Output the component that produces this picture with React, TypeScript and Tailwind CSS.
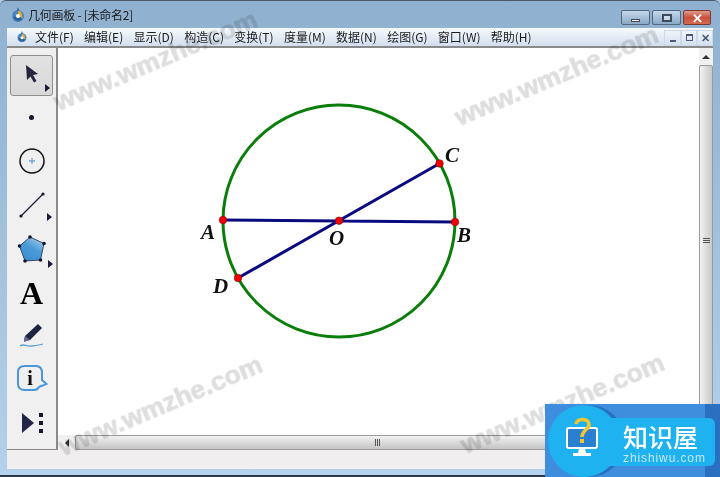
import React from 'react'

const cjk = { fontFamily: '"Noto Sans CJK SC", "Liberation Sans", sans-serif' }

const menus = ['文件(F)', '编辑(E)', '显示(D)', '构造(C)', '变换(T)', '度量(M)', '数据(N)', '绘图(G)', '窗口(W)', '帮助(H)']

const points: [string, number, number][] = [
  ['A', 222, 220],
  ['B', 454, 222],
  ['C', 438.5, 163.5],
  ['D', 237, 278],
  ['O', 338, 220.7],
]

const labels: [string, number, number][] = [
  ['A', 200, 239],
  ['B', 456, 242],
  ['C', 444, 162],
  ['D', 212, 293],
  ['O', 328, 245],
]

const marks = [
  { x: 55, y: 90 },
  { x: 456, y: 105 },
  { x: 60, y: 435 },
  { x: 462, y: 433 },
]

function SmallArrow() {
  return <span className="absolute right-[2px] bottom-[3px] h-0 w-0 border-y-[4px] border-l-[5px] border-y-transparent border-l-[#1a1a3a]" />
}

function AppIcon({ size }: { size: number }) {
  return (
    <svg width={size} height={size} viewBox="0 0 16 16">
      <circle cx="8" cy="9" r="6" fill="#4a86c0" />
      <path d="M8 3 C11 4 13 7 12 11 L8 9 Z" fill="#e8a53a" />
      <path d="M3 10 C5 14 9 15 12 12 L8 9 Z" fill="#2d5f96" />
      <circle cx="8" cy="9" r="2" fill="#ffffff" />
      <path d="M8 0 L9.5 4 L6.5 4 Z" fill="#3b6ea5" />
    </svg>
  )
}

function Tools() {
  return (
    <div className="flex w-[51px] shrink-0 flex-col items-center border-r-2 border-[#8a8a8a] bg-[#f0f0f0] pt-[7px]">
      <div className="relative flex h-[41px] w-[43px] items-center justify-center rounded-[3px] border border-[#8e8e8e] bg-gradient-to-b from-[#e2e2e2] to-[#d8d8d8]">
        <svg width="16" height="20" viewBox="0 0 16 20" className="mb-[4px]">
          <path d="M2 1 L14 10 L9 11 L12.5 17 L10 18.5 L6.5 12.5 L3 16 Z" fill="#24243f" />
        </svg>
        <SmallArrow />
      </div>
      <div className="flex h-[43px] w-[43px] items-center justify-center">
        <span className="h-[5px] w-[5px] rounded-full bg-[#16162e]" />
      </div>
      <div className="flex h-[44px] w-[43px] items-center justify-center">
        <svg width="28" height="28" viewBox="0 0 28 28">
          <circle cx="14" cy="14" r="12" fill="none" stroke="#111" strokeWidth="1.5" />
          <path d="M14 11 V17 M11 14 H17" stroke="#6aa5dc" strokeWidth="1.3" />
        </svg>
      </div>
      <div className="relative flex h-[44px] w-[43px] items-center justify-center">
        <svg width="28" height="28" viewBox="0 0 28 28">
          <path d="M3 25 L25 3" stroke="#1d1d3a" strokeWidth="1.2" />
          <circle cx="3" cy="25" r="1.6" fill="#16162e" />
          <circle cx="25" cy="3" r="1.6" fill="#16162e" />
        </svg>
        <span className="absolute right-[1px] bottom-[6px] h-0 w-0 border-y-[4px] border-l-[5px] border-y-transparent border-l-[#1a1a3a]" />
      </div>
      <div className="relative flex h-[44px] w-[43px] items-center justify-center">
        <svg width="30" height="30" viewBox="0 0 30 30">
          <defs>
            <linearGradient id="pent" x1="0.8" y1="0" x2="0.2" y2="1">
              <stop offset="0" stopColor="#a9cbea" />
              <stop offset="0.45" stopColor="#4b9cd8" />
              <stop offset="1" stopColor="#3a8dce" />
            </linearGradient>
          </defs>
          <path d="M13 3 L27 9.5 L23.5 26 L8 27 L2.5 12 Z" fill="url(#pent)" stroke="#1d2a4a" strokeWidth="0.8" />
          {[[13, 3], [27, 9.5], [23.5, 26], [8, 27], [2.5, 12]].map(([x, y]) => (
            <circle key={x} cx={x} cy={y} r="1.8" fill="#16162e" />
          ))}
        </svg>
        <span className="absolute right-[0px] bottom-[3px] h-0 w-0 border-y-[4px] border-l-[5px] border-y-transparent border-l-[#1a1a3a]" />
      </div>
      <div className="flex h-[43px] w-[43px] items-center justify-center">
        <span className="text-[32px] leading-none font-bold text-black" style={{ fontFamily: '"Liberation Serif", serif' }}>A</span>
      </div>
      <div className="flex h-[43px] w-[43px] items-center justify-center">
        <svg width="26" height="26" viewBox="0 0 26 26">
          <path d="M19 1 L23 5 L11 17 L5 18 L6 13 Z" fill="#1e2340" />
          <path d="M6 13 L11 17 L5 19 Z" fill="#5d6b8c" />
          <path d="M1 23 C5 20 7 24 13 23 C17 22.5 21 22 24 21" fill="none" stroke="#5c9fd8" strokeWidth="1.3" />
        </svg>
      </div>
      <div className="flex h-[43px] w-[43px] items-center justify-center">
        <svg width="32" height="30" viewBox="0 0 32 30">
          <path d="M9 2 H20 C24 2 26 5 26 9 V16 L30.5 20 C28 21.5 25 21.5 23 23 C22 25 21 26 18 26 H9 C5 26 2 24 2 20 V8 C2 4 5 2 9 2 Z" fill="none" stroke="#4a96d8" strokeWidth="2" />
          <text x="14" y="21" textAnchor="middle" fontFamily="Liberation Serif, serif" fontWeight="700" fontSize="20" fill="#111">i</text>
        </svg>
      </div>
      <div className="flex h-[45px] w-[43px] items-center justify-center">
        <svg width="24" height="22" viewBox="0 0 24 22">
          <path d="M2 1 L14 11 L2 21 Z" fill="#24244a" />
          <rect x="19" y="1" width="4" height="4" fill="#16162e" />
          <rect x="19" y="9" width="4" height="4" fill="#16162e" />
          <rect x="19" y="17" width="4" height="4" fill="#16162e" />
        </svg>
      </div>
    </div>
  )
}

function Drawing() {
  return (
    <svg className="block h-full w-full" viewBox="58 48 639 387">
      <circle cx="338" cy="221" r="116" fill="none" stroke="#0a7d0a" strokeWidth="3" />
      <path d="M222 220 L454 222 M438.5 163.5 L237 278" stroke="#0a0a80" strokeWidth="3" />
      {points.map(([k, x, y]) => (
        <circle key={k} cx={x} cy={y} r="3.8" fill="#f00000" stroke="#7a1010" strokeWidth="0.6" />
      ))}
      {labels.map(([k, x, y]) => (
        <text key={k} x={x} y={y} fontFamily="Liberation Serif, serif" fontStyle="italic" fontWeight="700" fontSize="21" fill="#111">
          {k}
        </text>
      ))}
    </svg>
  )
}

function Logo() {
  return (
    <div className="absolute top-[404px] left-[545px] h-[73px] w-[175px] overflow-hidden bg-[#3f8ddd]">
      <div className="absolute top-0 right-0 h-full w-[15px] bg-[#2a6fc0]" />
      <div className="absolute top-[1px] left-[8px] h-[72px] w-[72px] rounded-full bg-[#2a6fc0]" />
      <div className="absolute top-[1px] left-[3px] h-[72px] w-[72px] rounded-full bg-[#1fb2f0]" />
      <div className="absolute top-[14px] left-[30px] h-[48px] w-[140px] rounded-[6px] bg-[#1fb2f0]" />
      <svg className="absolute top-[13px] left-[21px]" width="32" height="41" viewBox="0 0 32 41">
        <rect x="1" y="11" width="30" height="20" rx="2" fill="#2a7fd0" stroke="#fff" strokeWidth="2" />
        <path d="M13 32 H19 L20 36 H25 V39 H7 V36 H12 Z" fill="#fff" />
        <path d="M10 7 C11 1 22 1 23 7 C24 12 16 13 16 20" fill="none" stroke="#f3c530" strokeWidth="3.6" />
        <rect x="14" y="22" width="4" height="4" fill="#f3c530" />
      </svg>
      <div className="absolute top-[17px] left-[78px] text-[25px] leading-[30px] font-medium whitespace-nowrap text-white" style={cjk}>知识屋</div>
      <div className="absolute top-[47px] left-[78px] text-[12px] leading-[14px] tracking-[0.9px] whitespace-nowrap text-[#c5e8fb]" style={{ fontFamily: '"Liberation Sans", sans-serif' }}>zhishiwu.com</div>
    </div>
  )
}

export default function App() {
  return (
    <div className="relative h-[477px] w-[720px] overflow-hidden bg-[#a9c9e8] text-[#1b1b1b]" style={cjk}>
      <div className="flex h-full flex-col rounded-t-[6px] border-t border-[#4a5a68] bg-gradient-to-b from-[#8fb0cf] via-[#a3c1dd] to-[#b4d2ee] pb-[2px]">
        {/* title bar */}
        <div className="flex h-[27px] shrink-0 items-center pr-[9px] pl-[10px]">
          <AppIcon size={16} />
          <span className="ml-[2px] text-[12px] tracking-[-0.25px] whitespace-nowrap">几何画板 - [未命名2]</span>
          <div className="ml-auto flex items-center gap-[2px] self-start pt-[9px]">
            <div className="flex h-[15px] w-[29px] items-end justify-center rounded-[2px] border border-[#51687f] bg-gradient-to-b from-[#c4d8ea] to-[#8aa9c6] pb-[2px]">
              <span className="h-[3px] w-[9px] border border-[#445] bg-white" />
            </div>
            <div className="flex h-[15px] w-[29px] items-center justify-center rounded-[2px] border border-[#51687f] bg-gradient-to-b from-[#c4d8ea] to-[#8aa9c6]">
              <span className="h-[8px] w-[10px] border-2 border-[#3d4a5c] bg-white/40" />
            </div>
            <div className="flex h-[15px] w-[28px] items-center justify-center rounded-[2px] border border-[#7a3a30] bg-gradient-to-b from-[#dd9a8a] via-[#c9503c] to-[#d26a50] text-[13px] leading-none font-bold text-white">✕</div>
          </div>
        </div>

        {/* menu bar */}
        <div className="mx-[7px] flex h-[20px] shrink-0 items-center border-b-2 border-[#8a8a8a] bg-gradient-to-b from-[#f6f9fd] to-[#d3deee] text-[12px]">
          <span className="ml-[9px] flex h-[14px] w-[12px] items-center justify-center"><AppIcon size={12} /></span>
          <div className="ml-[7px] flex gap-[10.3px] whitespace-nowrap">
            {menus.map((m) => (
              <span key={m}>{m}</span>
            ))}
          </div>
          <div className="mt-[1px] ml-auto flex text-[#4a5a78]">
            <span className="flex h-[16px] w-[17px] items-end justify-center border border-[#cdd8e8] pb-[3px]"><span className="h-[2px] w-[6px] bg-[#4a5a78]" /></span>
            <span className="flex h-[16px] w-[16px] items-center justify-center border border-[#cdd8e8]"><span className="h-[7px] w-[7px] border border-t-2 border-[#4a5a78]" /></span>
            <span className="flex h-[16px] w-[16px] items-center justify-center border border-[#cdd8e8] text-[11px] leading-none font-bold">✕</span>
          </div>
        </div>

        {/* client area */}
        <div className="mx-[7px] flex min-h-0 flex-1 border-b border-[#8a8a8a] bg-[#f0f0f0]">
          <Tools />
          <div className="flex min-w-0 flex-1 flex-col">
            <div className="flex h-[387px] shrink-0">
              <div className="min-w-0 flex-1 bg-white">
                <Drawing />
              </div>
              <div className="flex w-[14px] shrink-0 flex-col bg-[#f0f0f0]">
                <div className="flex h-[17px] shrink-0 items-center justify-center">
                  <span className="h-0 w-0 border-x-[4px] border-b-[4px] border-x-transparent border-b-[#333]" />
                </div>
                <div className="flex flex-1 items-center justify-center rounded-[2px] border border-[#9a9a9a] bg-gradient-to-r from-[#f2f2f2] to-[#c8c8c8]">
                  <div className="flex flex-col gap-[1px]">
                    <span className="h-[1px] w-[7px] bg-[#555]" />
                    <span className="h-[1px] w-[7px] bg-[#555]" />
                    <span className="h-[1px] w-[7px] bg-[#555]" />
                  </div>
                </div>
                <div className="h-[20px] shrink-0" />
              </div>
            </div>
            <div className="flex h-[15px] shrink-0 bg-[#f0f0f0]">
              <div className="flex w-[17px] shrink-0 items-center justify-center">
                <span className="h-0 w-0 border-y-[4px] border-r-[4px] border-y-transparent border-r-[#333]" />
              </div>
              <div className="flex flex-1 items-center justify-center rounded-[2px] border border-[#9a9a9a] bg-gradient-to-b from-[#f2f2f2] to-[#c4c4c4]">
                <div className="flex gap-[1px]">
                  <span className="h-[7px] w-[1px] bg-[#555]" />
                  <span className="h-[7px] w-[1px] bg-[#555]" />
                  <span className="h-[7px] w-[1px] bg-[#555]" />
                </div>
              </div>
              <div className="w-[34px] shrink-0" />
            </div>
          </div>
        </div>

        {/* status bar */}
        <div className="mx-[7px] h-[19px] shrink-0 bg-[#f0eeee]" />
        <div className="h-[6px] shrink-0" />
      </div>
      <div className="absolute inset-x-0 bottom-0 h-[2px] bg-[#2c3a48]" />

      {/* site watermarks lie over the whole window */}
      {marks.map((m) => (
        <div
          key={m.x + m.y}
          className="pointer-events-none absolute origin-left -rotate-[23deg] text-[26.5px] leading-none font-bold whitespace-nowrap text-[#dedede] mix-blend-multiply blur-[0.4px] [-webkit-text-stroke:0.7px_#dedede]"
          style={{ left: m.x, top: m.y, fontFamily: '"Liberation Sans", sans-serif' }}
        >
          www.wmzhe.com
        </div>
      ))}
      <Logo />
    </div>
  )
}
